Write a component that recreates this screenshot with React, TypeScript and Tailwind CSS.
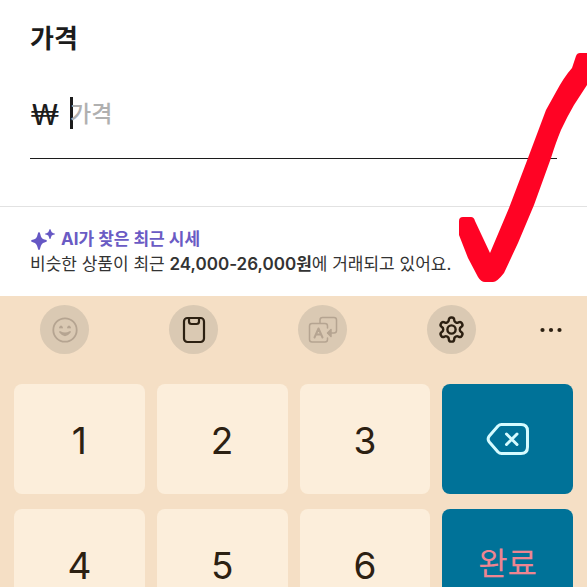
import { useState, type ReactNode } from "react";

function SparkleIcon() {
  return (
    <svg width="25" height="22" viewBox="0 0 25 22" fill="#6557c4" aria-hidden="true">
      <path d="M9 3 Q10 3 10.4 5.5 Q11.2 9.8 14.5 10.6 Q17 11 17 12 Q17 13 14.5 13.4 Q11.2 14.2 10.4 18.5 Q10 21 9 21 Q8 21 7.6 18.5 Q6.8 14.2 3.5 13.4 Q1 13 1 12 Q1 11 3.5 10.6 Q6.8 9.8 7.6 5.5 Q8 3 9 3Z" />
      <path d="M20 0 Q20.7 0 20.9 1.5 Q21.3 3.8 23.4 4.2 Q25 4.4 25 5 Q25 5.6 23.4 5.8 Q21.3 6.2 20.9 8.4 Q20.7 10 20 10 Q19.3 10 19.1 8.4 Q18.7 6.2 16.6 5.8 Q15 5.6 15 5 Q15 4.4 16.6 4.2 Q18.7 3.8 19.1 1.5 Q19.3 0 20 0Z" />
    </svg>
  );
}

function SmileIcon() {
  return (
    <svg width="26" height="26" viewBox="0 0 26 26" fill="none" stroke="#b5a491" strokeWidth="1.8" strokeLinecap="round" strokeLinejoin="round">
      <circle cx="13" cy="13" r="11.7" />
      <path d="M8 10.5 L9 9.5 L10 10.5 M16 10.5 L17 9.5 L18 10.5" />
      <path d="M8 15 Q13 21.5 18 15 Q13 18 8 15Z" />
    </svg>
  );
}

function ClipboardIcon() {
  return (
    <svg width="24" height="28" viewBox="0 0 24 28" fill="none" stroke="#2c2012" strokeWidth="2.2" strokeLinejoin="round">
      <rect x="2" y="2" width="20" height="24" rx="3.5" />
      <path d="M7 2 V5.5 Q7 8 9.5 8 H14.5 Q17 8 17 5.5 V2" />
    </svg>
  );
}

function TranslateIcon() {
  return (
    <svg width="30" height="28" viewBox="0 0 30 28" fill="none" stroke="#b5a491" strokeWidth="1.5" strokeLinecap="round" strokeLinejoin="round">
      <path d="M12 7 V4 Q12 1.5 14.5 1.5 H26 Q28.5 1.5 28.5 4 V14.5 Q28.5 17 26 17 H20" />
      <path d="M23 13.5 L19.5 17 L23 20.5Z" fill="#b5a491" />
      <path d="M19.5 12 V10 Q19.5 7.5 17 7.5 H4 Q1.5 7.5 1.5 10 V23.5 Q1.5 26 4 26 H17 Q19.5 26 19.5 23.5 V22" />
      <path d="M6.5 21.5 L10.5 12.5 L14.5 21.5 M8 18.5 H13" strokeWidth="2" />
    </svg>
  );
}

function GearIcon() {
  return (
    <svg width="29" height="29" viewBox="0 0 24 24" fill="none" stroke="#2c2012" strokeWidth="2" strokeLinecap="round" strokeLinejoin="round">
      <path d="M12.22 2h-.44a2 2 0 0 0-2 2v.18a2 2 0 0 1-1 1.73l-.43.25a2 2 0 0 1-2 0l-.15-.08a2 2 0 0 0-2.73.73l-.22.38a2 2 0 0 0 .73 2.73l.15.1a2 2 0 0 1 1 1.72v.51a2 2 0 0 1-1 1.74l-.15.09a2 2 0 0 0-.73 2.73l.22.38a2 2 0 0 0 2.73.73l.15-.08a2 2 0 0 1 2 0l.43.25a2 2 0 0 1 1 1.73V20a2 2 0 0 0 2 2h.44a2 2 0 0 0 2-2v-.18a2 2 0 0 1 1-1.73l.43-.25a2 2 0 0 1 2 0l.15.08a2 2 0 0 0 2.73-.73l.22-.39a2 2 0 0 0-.73-2.73l-.15-.08a2 2 0 0 1-1-1.74v-.5a2 2 0 0 1 1-1.74l.15-.09a2 2 0 0 0 .73-2.73l-.22-.38a2 2 0 0 0-2.73-.73l-.15.08a2 2 0 0 1-2 0l-.43-.25a2 2 0 0 1-1-1.73V4a2 2 0 0 0-2-2z" />
      <circle cx="12" cy="12" r="3.4" />
    </svg>
  );
}

function MoreIcon() {
  return (
    <svg width="22" height="6" viewBox="0 0 22 6" fill="#2c2012">
      <circle cx="2.5" cy="3" r="2.1" />
      <circle cx="11" cy="3" r="2.1" />
      <circle cx="19.5" cy="3" r="2.1" />
    </svg>
  );
}

function BackspaceIcon() {
  return (
    <svg width="44" height="34" viewBox="0 0 44 34" fill="none" stroke="#d5fbff" strokeWidth="3" strokeLinecap="round" strokeLinejoin="round">
      <path d="M15.5 2.5 H35 Q41.5 2.5 41.5 9 V25 Q41.5 31.5 35 31.5 H15.5 Q13.5 31.5 12 30 L3.3 20 Q1 17 3.3 14 L12 4 Q13.5 2.5 15.5 2.5Z" />
      <path d="M20.5 12 L31 22.5 M31 12 L20.5 22.5" />
    </svg>
  );
}

// red marker stroke drawn over the form
function CheckMark() {
  return (
    <svg width="128" height="232" viewBox="0 0 128 232" fill="#ff0324" className="pointer-events-none absolute right-0 top-[52px]" aria-hidden="true">
      <path d="M128 1 H121 Q118 1 117 4 L113 16 Q105 25 97 40 L87 58 Q78 82 69 106 L50 156 L31 201 L16 169 Q15 165 12 165 H4 Q0 165 0 169 V183 L9 206 L19 225 Q22 230 26 230 H34 Q38 230 45 221 L59 191 L75 153 L92 106 Q97 90 102 78 Q108 65 115 53 L128 33Z" />
    </svg>
  );
}

function ToolButton({ label, children }: { label: string; children: ReactNode }) {
  return (
    <button aria-label={label} className="flex size-[49px] items-center justify-center rounded-full bg-[#dac9b3]">
      {children}
    </button>
  );
}

function DigitKey({ digit, onPress }: { digit: string; onPress: (digit: string) => void }) {
  return (
    <button
      onClick={() => onPress(digit)}
      className="h-[110px] rounded-lg bg-[#fceedb] pt-1 text-[37px] leading-10 text-[#2c2012]"
    >
      {digit}
    </button>
  );
}

export default function App() {
  const [price, setPrice] = useState("");
  const press = (digit: string) => setPrice(price + digit);

  return (
    <div className="relative flex h-screen w-full flex-col overflow-hidden bg-white font-['Inter','Noto_Sans_CJK_KR',sans-serif] text-[#1c1c1c]">
      <section className="shrink-0 border-b border-[#e2e2e2] px-[30px] pt-[21px] pb-[47px]">
        <label htmlFor="price" className="block text-[26px] leading-9 font-bold">
          가격
        </label>
        <div className="mt-[31px] flex h-[71px] items-start border-b border-[#1c1c1c] text-[28px] leading-[52px] font-medium">
          <span className="w-10 font-['Lato',sans-serif]">₩</span>
          <span className="mt-[9px] -mr-[3px] h-8 w-[3px] bg-[#1c1c1c]" />
          <input
            id="price"
            inputMode="numeric"
            placeholder="가격"
            value={price}
            onChange={(e) => setPrice(e.target.value)}
            className="h-[52px] min-w-0 flex-1 text-[23px] outline-none placeholder:text-[#b0b0b0]"
          />
        </div>
      </section>

      <section className="h-[89px] shrink-0 px-[30px] pt-5 text-[17px] leading-[25px]">
        <h2 className="flex items-center gap-[6px] font-bold text-[#6a5bc4]">
          <SparkleIcon />
          AI가 찾은 최근 시세
        </h2>
        <p className="whitespace-nowrap text-[#333333]">
          비슷한 상품이 최근 <b className="font-semibold">24,000-26,000원</b>에 거래되고 있어요.
        </p>
      </section>

      <section className="shrink-0 bg-[#f5dfc5] pb-[15px]">
        <div className="flex items-center gap-16 pt-[9px] pr-[25px] pl-10">
          <div className="flex flex-1 justify-between">
            <ToolButton label="이모티콘"><SmileIcon /></ToolButton>
            <ToolButton label="클립보드"><ClipboardIcon /></ToolButton>
            <ToolButton label="번역"><TranslateIcon /></ToolButton>
            <ToolButton label="설정"><GearIcon /></ToolButton>
          </div>
          <button aria-label="더보기"><MoreIcon /></button>
        </div>

        <div className="mt-[30px] grid grid-cols-4 gap-x-3 gap-y-[15px] px-[14px]">
          <DigitKey digit="1" onPress={press} />
          <DigitKey digit="2" onPress={press} />
          <DigitKey digit="3" onPress={press} />
          <button
            aria-label="지우기"
            onClick={() => setPrice(price.slice(0, -1))}
            className="flex h-[110px] items-center justify-center rounded-lg bg-[#007298]"
          >
            <BackspaceIcon />
          </button>
          <DigitKey digit="4" onPress={press} />
          <DigitKey digit="5" onPress={press} />
          <DigitKey digit="6" onPress={press} />
          <button className="h-[110px] rounded-lg bg-[#007298] text-[32px] leading-10 text-[#ee8591]">완료</button>
        </div>
      </section>

      <CheckMark />
    </div>
  );
}
